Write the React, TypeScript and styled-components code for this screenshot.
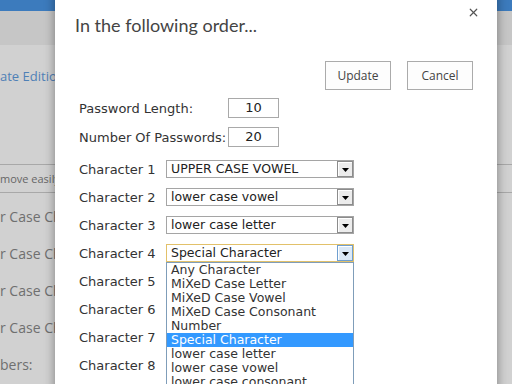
import styled, { createGlobalStyle } from "styled-components";
import { X } from "lucide-react";

const GlobalStyle = createGlobalStyle`
  html, body {
    margin: 0;
    padding: 0;
    width: 512px;
    height: 384px;
    overflow: hidden;
    background: #d1d1d1;
  }
`;

const options = [
    "Any Character",
    "MiXeD Case Letter",
    "MiXeD Case Vowel",
    "MiXeD Case Consonant",
    "Number",
    "Special Character",
    "lower case letter",
    "lower case vowel",
    "lower case consonant",
];

const characters = [
    "UPPER CASE VOWEL",
    "lower case vowel",
    "lower case letter",
    "Special Character",
    "",
    "",
    "",
    "",
];

export default function App() {
    return (
        <Screen>
            <GlobalStyle />
            <Page>
                <TopBar />
                <Ribbon />
                <PageBody>
                    <SiteLink>ate Edition</SiteLink>
                    <Note>move easily</Note>
                    <CaseRow>r Case Ch</CaseRow>
                    <CaseRow>r Case Ch</CaseRow>
                    <CaseRow>r Case Ch</CaseRow>
                    <CaseRow>r Case Ch</CaseRow>
                    <CaseRow>bers:</CaseRow>
                </PageBody>
            </Page>

            <Dialog>
                <Close><X size={13} strokeWidth={2.2} /></Close>
                <Title>In the following order...</Title>
                <Actions>
                    <Button>Update</Button>
                    <Button>Cancel</Button>
                </Actions>
                <Fields>
                    <Label>Password Length:</Label>
                    <NumberBox>10</NumberBox>
                    <Label>Number Of Passwords:</Label>
                    <NumberBox>20</NumberBox>
                </Fields>
                <Chars>
                    {characters.map((value, i) => (
                        <Row key={i}>
                            <Label>Character {i + 1}</Label>
                            {value && (
                                <Select $focused={i === 3}>
                                    <SelectText>{value}</SelectText>
                                    <Arrow $focused={i === 3}>
                                        <svg width="7" height="4" viewBox="0 0 7 4">
                                            <path d="M0 0h7L3.5 4z" fill="#000" />
                                        </svg>
                                    </Arrow>
                                    {i === 3 && (
                                        <List>
                                            {options.map((o) => (
                                                <Option key={o} $active={o === value}>{o}</Option>
                                            ))}
                                        </List>
                                    )}
                                </Select>
                            )}
                        </Row>
                    ))}
                </Chars>
            </Dialog>
        </Screen>
    );
}

const Screen = styled.div`
    position: relative;
    width: 512px;
    height: 384px;
    overflow: hidden;
`;

const Page = styled.div`
    display: flex;
    flex-direction: column;
    min-height: 384px;
    background: #d1d1d1;
`;

const TopBar = styled.div`
    flex-shrink: 0;
    height: 11px;
    background: #3c7bbd;
`;

const Ribbon = styled.div`
    flex-shrink: 0;
    height: 34px;
    background: #c6c6c6;
`;

const PageBody = styled.div`
    display: flex;
    flex-direction: column;
    font-family: "Open Sans", sans-serif;
    color: #6f6f6f;
`;

const SiteLink = styled.div`
    margin-top: 22px;
    height: 18px;
    line-height: 18px;
    font-size: 13px;
    color: #4f80b6;
`;

const Note = styled.div`
    margin-top: 79px;
    margin-bottom: 5px;
    height: 27px;
    border-top: 1px solid #a8a8a8;
    border-bottom: 1px solid #a8a8a8;
    font-size: 11px;
    line-height: 27px;
    color: #666;
`;

const CaseRow = styled.div`
    flex-shrink: 0;
    height: 37px;
    line-height: 37px;
    font-size: 14px;
`;

const Dialog = styled.div`
    position: absolute;
    left: 55px;
    top: -10px;
    width: 442px;
    height: 420px;
    box-sizing: border-box;
    padding: 10px 24px 0 20px;
    background: #fff;
    box-shadow: 0 0 10px rgba(0, 0, 0, 0.4);
    font-family: "DejaVu Sans", Verdana, sans-serif;
    color: #333;
`;

const Close = styled.div`
    position: absolute;
    right: 17px;
    top: 16px;
    color: #555;
    display: flex;
`;

const Title = styled.h1`
    margin: 0;
    padding-top: 11px;
    font-family: Lato, "Open Sans", sans-serif;
    font-weight: 400;
    font-size: 18px;
    line-height: 28px;
    color: #444;
`;

const Actions = styled.div`
    display: flex;
    justify-content: flex-end;
    gap: 16px;
    margin-top: 22px;
`;

const Button = styled.div`
    width: 64px;
    height: 27px;
    border: 1px solid #ababab;
    background: #fdfdfd;
    display: flex;
    align-items: center;
    justify-content: center;
    font-family: "Open Sans", sans-serif;
    font-size: 12px;
    color: #444;
`;

const Fields = styled.div`
    display: grid;
    grid-template-columns: 149px 51px;
    row-gap: 9px;
    align-items: center;
    margin-top: 8px;
    padding-left: 4px;
`;

const Label = styled.div`
    font-size: 13px;
    color: #333;
    white-space: nowrap;
`;

const NumberBox = styled.div`
    height: 20px;
    box-sizing: border-box;
    border: 1px solid #a9a9a9;
    font-size: 13px;
    line-height: 18px;
    text-align: center;
    color: #222;
`;

const Chars = styled.div`
    display: flex;
    flex-direction: column;
    gap: 10px;
    margin-top: 13px;
    padding-left: 4px;
`;

const Row = styled.div`
    display: grid;
    grid-template-columns: 87px 188px;
    align-items: center;
    height: 18px;
`;

const Select = styled.div<{ $focused: boolean }>`
    position: relative;
    display: flex;
    align-items: center;
    height: 18px;
    box-sizing: border-box;
    border: 1px solid ${(p) => (p.$focused ? "#e2c16a" : "#a5a5a5")};
    background: #fff;
`;

const SelectText = styled.div`
    flex: 1;
    padding-left: 4px;
    font-size: 12.5px;
    line-height: 16px;
    color: #222;
    white-space: nowrap;
`;

const Arrow = styled.div<{ $focused: boolean }>`
    width: 16px;
    height: 16px;
    box-sizing: border-box;
    border: 1px solid ${(p) => (p.$focused ? "#6f9fd0" : "#8c8c8c")};
    background: ${(p) => (p.$focused ? "#dbe9f7" : "#ececec")};
    box-shadow: inset 1px 1px 0 #fff;
    display: flex;
    align-items: flex-end;
    justify-content: center;
    padding-bottom: 4px;
`;

const List = styled.div`
    position: absolute;
    left: -1px;
    top: 17px;
    width: 188px;
    box-sizing: border-box;
    border: 1px solid #7f9db9;
    background: #fff;
    z-index: 2;
`;

const Option = styled.div<{ $active: boolean }>`
    height: 14px;
    line-height: 14px;
    padding-left: 4px;
    font-size: 12.5px;
    white-space: nowrap;
    background: ${(p) => (p.$active ? "#3399ff" : "#fff")};
    color: ${(p) => (p.$active ? "#fff" : "#333")};
`;
